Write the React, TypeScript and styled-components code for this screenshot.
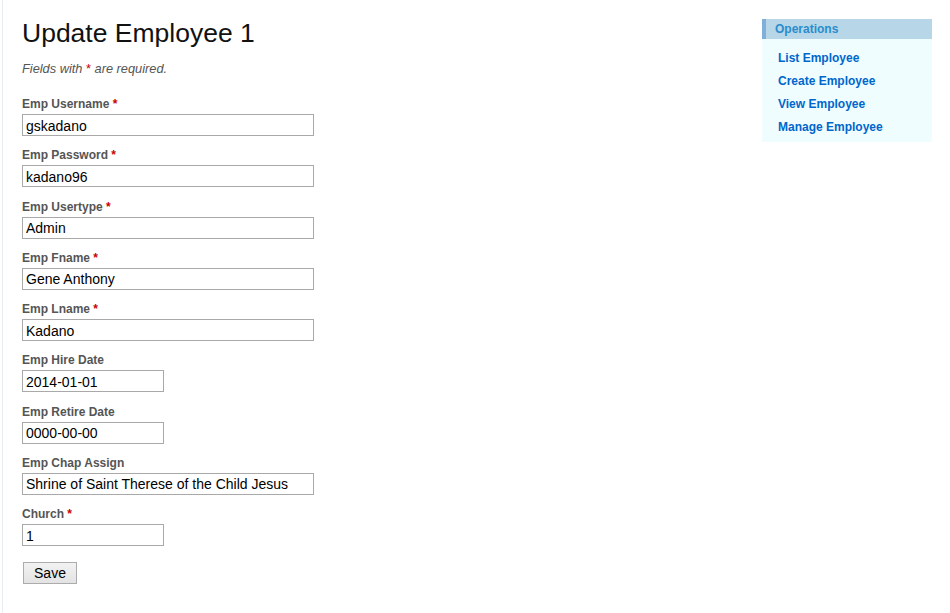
import React from "react";
import styled, { createGlobalStyle } from "styled-components";

const Global = createGlobalStyle`
  html, body { margin: 0; padding: 0; background: #fff; }
  body { font-family: "Liberation Sans", Arial, sans-serif; color: #222; }
`;

const Page = styled.div`
  margin-left: 2px;
  border-left: 1px solid #e6edf3;
  min-height: 613px;
  display: flex;
  align-items: flex-start;
`;

const Main = styled.div`
  flex: 1;
  padding: 18px 0 0 19px;
`;

const Title = styled.h1`
  margin: 0;
  font-size: 26.5px;
  line-height: 30px;
  font-weight: normal;
  color: #111;
`;

const Note = styled.p`
  margin: 13px 0 0;
  font-size: 12.8px;
  line-height: 16px;
  font-style: italic;
  color: #555;
`;

const Required = styled.span`
  color: #c00;
  font-style: normal;
`;

const LabelReq = styled.span`
  color: #c00;
`;

const Form = styled.form`
  margin-top: 19px;
  display: flex;
  flex-direction: column;
`;

const Row = styled.div`
  display: flex;
  flex-direction: column;
  align-items: flex-start;
  margin-bottom: 11.25px;
`;

const Label = styled.label`
  display: block;
  font-size: 12px;
  line-height: 16px;
  font-weight: bold;
  color: #555;
  margin-bottom: 2px;
`;

const Input = styled.input<{ $w: number }>`
  box-sizing: border-box;
  width: ${(p) => p.$w}px;
  height: 22px;
  border: 1px solid #a9a9a9;
  padding: 1px 3px 0;
  font-family: "Liberation Sans", Arial, sans-serif;
  font-size: 14px;
  color: #000;
  background: #fff;
  outline: none;
`;

const Button = styled.button`
  box-sizing: border-box;
  margin: 5px 0 0 1px;
  width: 54px;
  height: 22px;
  border: 1px solid #acacac;
  background: linear-gradient(#f2f2f2, #e3e3e3);
  font-family: "Liberation Sans", Arial, sans-serif;
  font-size: 14px;
  color: #000;
  padding: 0;
  align-self: flex-start;
`;

const Side = styled.div`
  width: 170px;
  margin: 19px 18px 0 0;
  background: #effdff;
  padding-bottom: 3px;
`;

const SideHead = styled.div`
  height: 20px;
  background: #b7d6e7;
  border-left: 4px solid #80b0da;
  padding-left: 9px;
  font-size: 12px;
  font-weight: bold;
  color: #298dcd;
  line-height: 21px;
`;

const Ops = styled.ul`
  list-style: none;
  margin: 0;
  padding: 8px 0 0 16px;
`;

const OpLink = styled.a`
  display: block;
  font-size: 12px;
  font-weight: bold;
  line-height: 23px;
  color: #06c;
  text-decoration: none;
`;

const fields: { label: string; value: string; req: boolean; w: number }[] = [
  { label: "Emp Username", value: "gskadano", req: true, w: 292 },
  { label: "Emp Password", value: "kadano96", req: true, w: 292 },
  { label: "Emp Usertype", value: "Admin", req: true, w: 292 },
  { label: "Emp Fname", value: "Gene Anthony", req: true, w: 292 },
  { label: "Emp Lname", value: "Kadano", req: true, w: 292 },
  { label: "Emp Hire Date", value: "2014-01-01", req: false, w: 142 },
  { label: "Emp Retire Date", value: "0000-00-00", req: false, w: 142 },
  { label: "Emp Chap Assign", value: "Shrine of Saint Therese of the Child Jesus", req: false, w: 292 },
  { label: "Church", value: "1", req: true, w: 142 },
];

export default function App() {
  return (
    <>
      <Global />
      <Page>
        <Main>
          <Title>Update Employee 1</Title>
          <Note>
            Fields with <Required>*</Required> are required.
          </Note>
          <Form onSubmit={(e) => e.preventDefault()}>
            {fields.map((f) => (
              <Row key={f.label}>
                <Label>
                  {f.label}
                  {f.req && <LabelReq> *</LabelReq>}
                </Label>
                <Input $w={f.w} defaultValue={f.value} />
              </Row>
            ))}
            <Button type="submit">Save</Button>
          </Form>
        </Main>
        <Side>
          <SideHead>Operations</SideHead>
          <Ops>
            <li><OpLink href="#">List Employee</OpLink></li>
            <li><OpLink href="#">Create Employee</OpLink></li>
            <li><OpLink href="#">View Employee</OpLink></li>
            <li><OpLink href="#">Manage Employee</OpLink></li>
          </Ops>
        </Side>
      </Page>
    </>
  );
}
